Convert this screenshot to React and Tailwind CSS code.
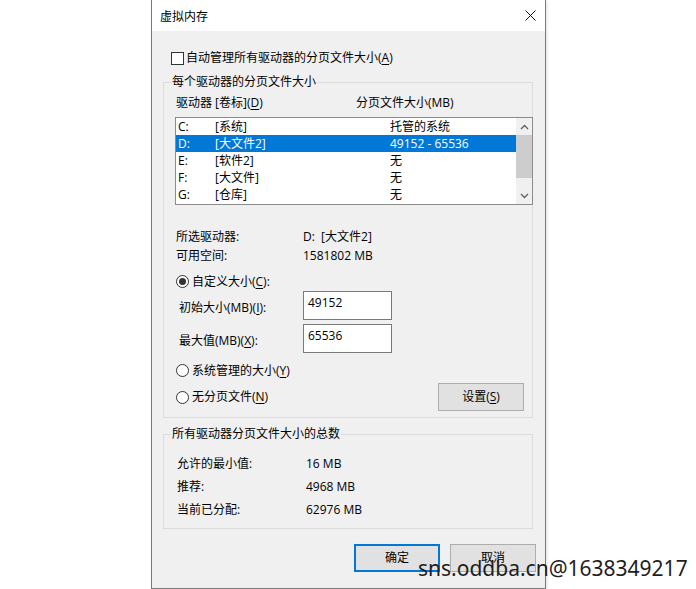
import React from "react";

// accelerator letter, underlined like the Win32 dialog
const U = ({ children }) => <span className="underline underline-offset-[2px]">{children}</span>;

const drives = [
  { letter: "C:", label: "[系统]", size: "托管的系统" },
  { letter: "D:", label: "[大文件2]", size: "49152 - 65536", selected: true },
  { letter: "E:", label: "[软件2]", size: "无" },
  { letter: "F:", label: "[大文件]", size: "无" },
  { letter: "G:", label: "[仓库]", size: "无" },
];

const Radio = ({ checked, children }) => (
  <div className="flex items-center h-[19px]">
    <span className="w-[13px] h-[13px] rounded-full border border-[#333] bg-white flex items-center justify-center">
      {checked && <span className="w-[7px] h-[7px] rounded-full bg-[#333]" />}
    </span>
    <span className="ml-[3px]">{children}</span>
  </div>
);

const Chevron = ({ up }) => (
  <svg width="9" height="6" viewBox="0 0 9 6">
    <path d={up ? "M1 5 L4.5 1.5 L8 5" : "M1 1 L4.5 4.5 L8 1"} fill="none" stroke="#606060" strokeWidth="1.3" />
  </svg>
);

const App = () => {
  return (
    <div className="w-[696px] h-[589px] bg-white relative overflow-hidden [font-family:'Open_Sans','Noto_Sans_CJK_SC',sans-serif] text-[12px] leading-[16px] text-black">
      <div className="ml-[151px] w-[395px] h-[589px] border-x border-b border-[#7a7a7a] flex flex-col shadow-[1px_1px_3px_rgba(0,0,0,0.12)]">
        {/* title bar */}
        <div className="h-[31px] bg-white flex items-center justify-between pl-[8px] pr-[8px] shrink-0">
          <span className="pt-[2px]">虚拟内存</span>
          <svg width="11" height="11" viewBox="0 0 11 11" className="mr-[1px]">
            <path d="M0.5 0.5 L10.5 10.5 M10.5 0.5 L0.5 10.5" stroke="#111" strokeWidth="1" />
          </svg>
        </div>

        <div className="flex-1 bg-[#f0f0f0] pt-[19px]">
          {/* auto manage checkbox */}
          <div className="flex items-center h-[16px] pl-[19px]">
            <span className="w-[13px] h-[13px] border border-[#333] bg-white" />
            <span className="ml-[2px]">
              自动管理所有驱动器的分页文件大小(<U>A</U>)
            </span>
          </div>

          {/* per-drive group */}
          <fieldset className="ml-[11px] mr-[12px] mt-[8px] border border-[#dcdcdc]">
            <legend className="ml-[7px] px-[1px] leading-[16px]">每个驱动器的分页文件大小</legend>
            <div className="pl-[12px] pt-[5px] pb-[6px]">
              <div className="flex h-[16px]">
                <span className="w-[180px]">
                  驱动器 [卷标](<U>D</U>)
                </span>
                <span>分页文件大小(MB)</span>
              </div>

              {/* drive list */}
              <div className="mt-[6px] -ml-px -mr-px h-[88px] border border-[#8c8c8c] bg-white flex">
                <div className="flex-1">
                  {drives.map((d) => (
                    <div
                      key={d.letter}
                      className={
                        "flex h-[17px] items-center pl-[2px] " +
                        (d.selected ? "bg-[#0078d7] text-white" : "")
                      }
                    >
                      <span className="w-[37px]">{d.letter}</span>
                      <span className="w-[175px]">{d.label}</span>
                      <span>{d.size}</span>
                    </div>
                  ))}
                </div>
                <div className="w-[16px] bg-[#f0f0f0] flex flex-col">
                  <div className="h-[17px] flex items-center justify-center">
                    <Chevron up />
                  </div>
                  <div className="h-[43px] bg-[#cdcdcd]" />
                  <div className="flex-1" />
                  <div className="h-[17px] flex items-center justify-center">
                    <Chevron />
                  </div>
                </div>
              </div>

              {/* selected drive info */}
              <div className="mt-[22px]">
                <div className="flex h-[19px] items-center">
                  <span className="w-[127px]">所选驱动器:</span>
                  <span>D:&nbsp;&nbsp;[大文件2]</span>
                </div>
                <div className="flex h-[19px] items-center">
                  <span className="w-[127px]">可用空间:</span>
                  <span>1581802 MB</span>
                </div>
              </div>

              <div className="mt-[7px]">
                <Radio checked>
                  自定义大小(<U>C</U>):
                </Radio>
              </div>

              <div className="flex items-center h-[29px]">
                <span className="w-[127px] pl-[3px] mt-[4px]">
                  初始大小(MB)(<U>I</U>):
                </span>
                <div className="w-[89px] h-[29px] border border-[#7a7a7a] bg-white pl-[4px] pt-[3px]">49152</div>
              </div>
              <div className="flex items-center h-[29px] mt-[4px]">
                <span className="w-[127px] pl-[3px] mt-[4px]">
                  最大值(MB)(<U>X</U>):
                </span>
                <div className="w-[89px] h-[29px] border border-[#7a7a7a] bg-white pl-[4px] pt-[3px]">65536</div>
              </div>

              <div className="mt-[8px]">
                <Radio>
                  系统管理的大小(<U>Y</U>)
                </Radio>
              </div>
              <div className="flex items-center justify-between h-[28px] mt-[3px] pr-[8px]">
                <Radio>
                  无分页文件(<U>N</U>)
                </Radio>
                <button className="w-[86px] h-[28px] bg-[#e1e1e1] border border-[#adadad] flex items-center justify-center">
                  <span>
                    设置(<U>S</U>)
                  </span>
                </button>
              </div>
            </div>
          </fieldset>

          {/* totals group */}
          <fieldset className="ml-[11px] mr-[12px] mt-[8px] border border-[#dcdcdc]">
            <legend className="ml-[7px] px-[1px] leading-[16px]">所有驱动器分页文件大小的总数</legend>
            <div className="pl-[13px] pt-[10px] pb-[7px]">
              <div className="flex h-[23px] items-center">
                <span className="w-[129px]">允许的最小值:</span>
                <span>16 MB</span>
              </div>
              <div className="flex h-[23px] items-center">
                <span className="w-[129px]">推荐:</span>
                <span>4968 MB</span>
              </div>
              <div className="flex h-[23px] items-center">
                <span className="w-[129px]">当前已分配:</span>
                <span>62976 MB</span>
              </div>
            </div>
          </fieldset>

          {/* OK / Cancel */}
          <div className="flex justify-end gap-[10px] pr-[9px] mt-[15px]">
            <button className="w-[86px] h-[28px] bg-[#e1e1e1] border-2 border-[#0078d7] flex items-center justify-center">
              确定
            </button>
            <button className="w-[86px] h-[28px] bg-[#e1e1e1] border border-[#adadad] flex items-center justify-center">
              取消
            </button>
          </div>
        </div>
      </div>

      {/* watermark over the dialog */}
      <div className="absolute left-[418px] top-[558px] [font-family:'Noto_Sans',sans-serif] text-[21px] leading-[21px] text-[#1e1e1e] whitespace-nowrap">
        sns.oddba.cn@1638349217
      </div>
    </div>
  );
};

export default App;
